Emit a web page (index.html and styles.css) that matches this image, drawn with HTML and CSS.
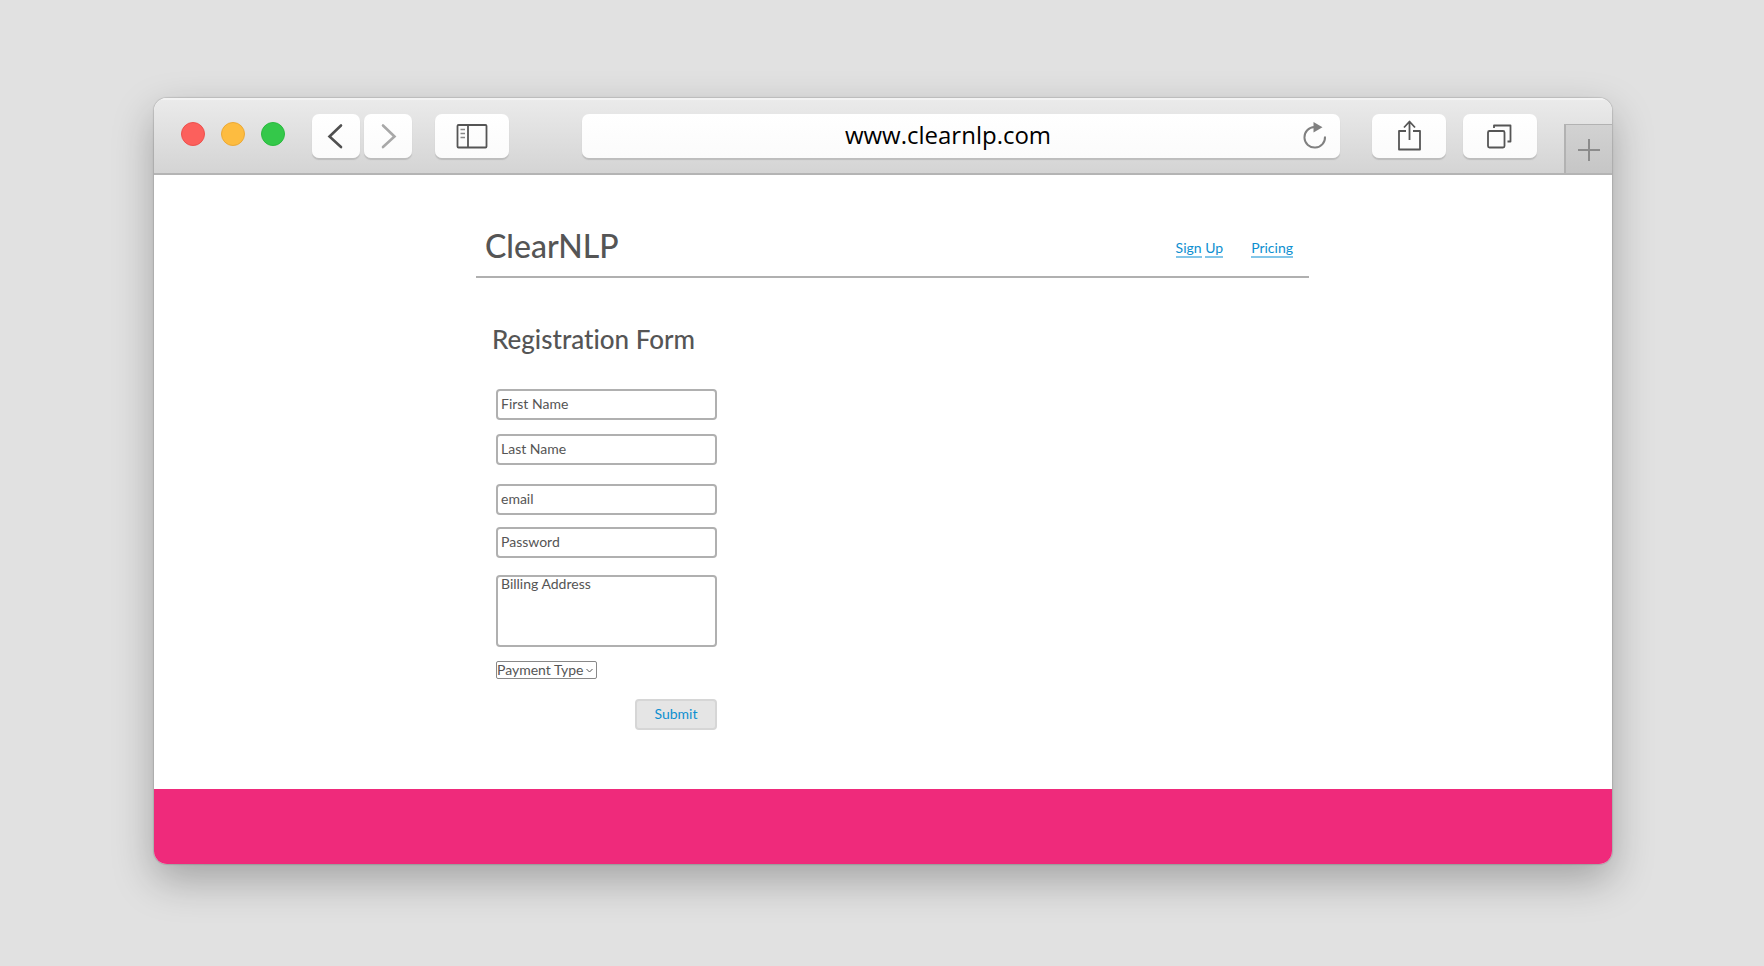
FILE: index.html
```html
<!DOCTYPE html>
<html lang="en">
<head>
<meta charset="utf-8">
<meta name="viewport" content="width=device-width, initial-scale=1">
<title>ClearNLP</title>
<link rel="stylesheet" href="styles.css">
</head>
<body>
<div class="window">
  <div class="toolbar">
    <div class="lights">
      <button class="light light-close" type="button" aria-label="Close"></button>
      <button class="light light-minimize" type="button" aria-label="Minimize"></button>
      <button class="light light-zoom" type="button" aria-label="Zoom"></button>
    </div>
    <div class="history">
      <button class="tool tool-small" type="button" aria-label="Back">
        <svg width="48" height="44" viewBox="0 0 48 44" fill="none" stroke="#505050" stroke-width="2.6" stroke-linecap="round" stroke-linejoin="miter"><path d="M29 11.500L17.500 22.500L29 33"/></svg>
      </button>
      <button class="tool tool-small" type="button" aria-label="Forward">
        <svg width="48" height="44" viewBox="0 0 48 44" fill="none" stroke="#a8a8a8" stroke-width="2.600" stroke-linecap="round" stroke-linejoin="miter"><path d="M19 11.500L30.500 22.500L19 33"/></svg>
      </button>
    </div>
    <button class="tool sidebar" type="button" aria-label="Sidebar">
      <svg width="74" height="44" viewBox="0 0 74 44" fill="none" stroke="#555" stroke-width="1.800"><rect x="22.500" y="11" width="29" height="22.500" rx="1"/><path d="M33 11V33"/><path d="M25.500 15.500h4.500M25.500 19.500h4.500M25.500 23.500h4.500" stroke="#888" stroke-width="1.500"/></svg>
    </button>
    <div class="address">
      <input class="url" type="text" value="www.clearnlp.com" aria-label="Address">
      <button class="reload" type="button" aria-label="Reload">
        <svg width="26" height="44" viewBox="0 0 26 44"><path d="M23 22.500A10.300 10.300 0 1 1 12.500 13" fill="none" stroke="#808080" stroke-width="2"/><path d="M11.500 8L20.500 13.200L11.500 18.500Z" fill="#808080"/></svg>
      </button>
    </div>
    <div class="actions">
      <button class="tool" type="button" aria-label="Share">
        <svg width="74" height="44" viewBox="0 0 74 44" fill="none" stroke="#555" stroke-width="1.800" stroke-linejoin="round"><path d="M34 17H27V35.500H48V17H41"/><path d="M37.500 26V8M32 13.500L37.500 7.500L43 13.500"/></svg>
      </button>
      <button class="tool" type="button" aria-label="Show tabs">
        <svg width="74" height="44" viewBox="0 0 74 44" fill="none" stroke="#555" stroke-width="1.800" stroke-linejoin="round"><rect x="25" y="17" width="16.500" height="16.500" rx="1.500"/><path d="M31 14V11.500H47.500V27.500H44.500"/></svg>
      </button>
    </div>
    <button class="new-tab" type="button" aria-label="New tab">
      <svg width="46" height="48" viewBox="0 0 46 48" stroke="#8c8c8c" stroke-width="2"><path d="M23 14V36M12 25H34"/></svg>
    </button>
  </div>
  <div class="viewport">
    <div class="page">
      <header class="masthead">
        <h1 class="brand">ClearNLP</h1>
        <nav class="links">
          <a class="link" href="#signup"><span>Sign</span> <span>Up</span></a>
          <a class="link" href="#pricing"><span>Pricing</span></a>
        </nav>
      </header>
      <main class="registration">
        <h2 class="heading">Registration Form</h2>
        <form class="form">
          <div class="group names">
            <input class="field" type="text" placeholder="First Name" aria-label="First Name">
            <input class="field" type="text" placeholder="Last Name" aria-label="Last Name">
          </div>
          <div class="group account">
            <input class="field" type="email" placeholder="email" aria-label="email">
            <input class="field" type="password" placeholder="Password" aria-label="Password">
          </div>
          <textarea class="field billing" placeholder="Billing Address" aria-label="Billing Address"></textarea>
          <div class="payment">
            <select class="payment-select" aria-label="Payment Type"><option>Payment Type</option></select>
            <svg class="chevron" width="7" height="5" viewBox="0 0 7 5" fill="none" stroke="#555"><path d="M.5 1L3.500 4L6.500 1"/></svg>
          </div>
          <button class="submit" type="submit">Submit</button>
        </form>
      </main>
    </div>
  </div>
  <footer class="footer"></footer>
</div>
</body>
</html>
```
FILE: styles.css
```css
* { box-sizing: border-box; }

body {
  margin: 0;
  min-height: 100vh;
  padding: 98px 152px 102px 154px;
  display: flex;
  background: #e1e1e1;
  color: #555;
  font-family: Lato, "Open Sans", sans-serif;
  font-variant-ligatures: none;
}

button, input, select, textarea { font: inherit; color: inherit; margin: 0; }
button { border: 0; padding: 0; cursor: pointer; }
svg { display: block; }

.window {
  flex: 1;
  min-width: 0;
  display: flex;
  flex-direction: column;
  overflow: hidden;
  border-radius: 13px;
  background: #fff;
  box-shadow: 0 0 1px 1px rgba(0, 0, 0, .12), 0 16px 42px rgba(0, 0, 0, .28);
}

.toolbar {
  display: flex;
  flex: none;
  align-items: flex-start;
  height: 77px;
  padding: 16px 0 0 27px;
  border-bottom: 2px solid #b4b4b4;
  background: linear-gradient(#ebebeb, #d4d4d4);
  box-shadow: inset 0 2px 0 #f3f3f3;
}

.lights { display: flex; gap: 16px; padding-top: 8px; margin-right: 27px; }
.light { width: 24px; height: 24px; border-radius: 50%; border: 1px solid; }
.light-close { background: #fc605c; border-color: #ec514d; }
.light-minimize { background: #fdbc40; border-color: #eba936; }
.light-zoom { background: #34c84a; border-color: #2aba3e; }

.history { display: flex; gap: 4px; margin-right: 23px; }

.tool, .address {
  height: 44px;
  border-radius: 7px;
  background: linear-gradient(#fff, #fbfbfb);
  box-shadow: 0 2px 1px #bdbdbd;
}
.tool { width: 74px; flex: none; overflow: hidden; }
.tool-small { width: 48px; }
.sidebar { margin-right: 73px; }

.address { flex: 1; min-width: 0; display: flex; padding-right: 12px; margin-right: 32px; }
.url {
  flex: 1;
  min-width: 0;
  border: 0;
  padding: 0 0 4px 12px;
  background: none;
  color: #000;
  font: 24px "Open Sans", sans-serif;
  text-align: center;
}
.reload { background: none; }

.actions { display: flex; gap: 17px; margin-right: 27px; }
.new-tab {
  align-self: flex-end;
  flex: none;
  border: solid #b2b2b2;
  border-width: 1px 0 0 2px;
  background: linear-gradient(#d2d2d2, #c6c6c6);
}

.viewport { flex: 1; display: flex; justify-content: center; padding: 40px 0 20px 19px; }
.page { width: 833px; max-width: 100%; }

.masthead {
  display: flex;
  align-items: center;
  justify-content: space-between;
  height: 63px;
  padding: 0 16px 0 9px;
  border-bottom: 2px solid #b0b0b0;
}
.brand { margin: 0; font-size: 32px; font-weight: 500; line-height: 44px; }
.links { display: flex; gap: 28px; padding-top: 7px; }
.link { color: #0e8fd0; font-size: 14px; line-height: 16px; text-decoration: none; }
.link span { display: inline-block; border-bottom: 2px solid #83c6e8; }

.registration { padding: 41px 0 0 16px; }
.heading { margin: 0 0 30px; font-size: 26px; font-weight: 500; line-height: 40px; }

.form { display: flex; flex-direction: column; width: 221px; margin-left: 4px; font-size: 14px; }
.group { display: grid; }
.names { gap: 14px; margin-bottom: 19px; }
.account { gap: 12px; margin-bottom: 17px; }
.field {
  display: block;
  width: 100%;
  height: 31px;
  padding: 0 3px 3px;
  border: 2px solid #b0b0b0;
  border-radius: 4px;
  background: #fff;
}
.field::placeholder { color: #555; opacity: 1; }
.billing { height: 72px; padding: 0 3px; line-height: 14px; resize: none; margin-bottom: 14px; }

.payment { position: relative; width: 101px; margin-bottom: 20px; }
.payment-select {
  appearance: none;
  display: block;
  width: 100%;
  height: 18px;
  padding: 0;
  border: 1px solid #888;
  border-radius: 2px;
  background: #fff;
  line-height: 14px;
}
.chevron { position: absolute; right: 4px; top: 7px; pointer-events: none; }

.submit {
  align-self: flex-end;
  width: 82px;
  height: 31px;
  padding-bottom: 3px;
  border: 2px solid #d6d6d6;
  border-radius: 4px;
  background: #e5e5e5;
  color: #0e8fd0;
}

.footer { flex: none; height: 75px; background: #ef2a7b; }
```
